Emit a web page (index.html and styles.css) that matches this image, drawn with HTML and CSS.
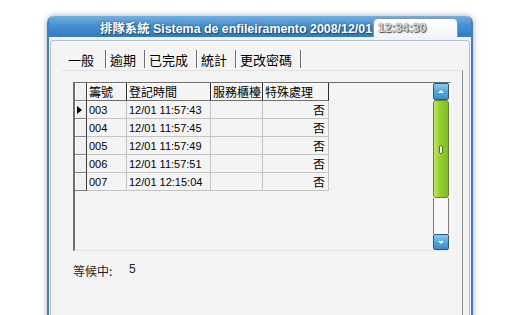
FILE: index.html
```html
<!DOCTYPE html>
<html lang="zh-Hant">
<head>
    <meta charset="UTF-8">
    <title>排隊系統</title>
    <link rel="stylesheet" href="styles.css">
</head>
<body>
    <div class="window">
        <div class="titlebar">
            <span class="title">排隊系統 Sistema de enfileiramento 2008/12/01</span>
            <span class="clock">12:34:30</span>
        </div>

        <div class="client">
            <div class="tabs">
                <span class="tab tab-first">一般</span>
                <span class="tab">逾期</span>
                <span class="tab">已完成</span>
                <span class="tab">統計</span>
                <span class="tab">更改密碼</span>
            </div>

            <div class="panel">
                <div class="grid">
                    <table class="rows">
                        <tr class="head">
                            <th class="ind"></th>
                            <th class="c-no">籌號</th>
                            <th class="c-time">登記時間</th>
                            <th class="c-desk">服務櫃檯</th>
                            <th class="c-spec">特殊處理</th>
                        </tr>
                        <tr>
                            <td class="ind"><span class="current"></span></td>
                            <td>003</td>
                            <td>12/01 11:57:43</td>
                            <td></td>
                            <td class="no">否</td>
                        </tr>
                        <tr>
                            <td class="ind"></td>
                            <td>004</td>
                            <td>12/01 11:57:45</td>
                            <td></td>
                            <td class="no">否</td>
                        </tr>
                        <tr>
                            <td class="ind"></td>
                            <td>005</td>
                            <td>12/01 11:57:49</td>
                            <td></td>
                            <td class="no">否</td>
                        </tr>
                        <tr>
                            <td class="ind"></td>
                            <td>006</td>
                            <td>12/01 11:57:51</td>
                            <td></td>
                            <td class="no">否</td>
                        </tr>
                        <tr>
                            <td class="ind"></td>
                            <td>007</td>
                            <td>12/01 12:15:04</td>
                            <td></td>
                            <td class="no">否</td>
                        </tr>
                    </table>

                    <div class="scrollbar">
                        <div class="sb-btn up"></div>
                        <div class="sb-thumb"><span class="grip"></span></div>
                        <div class="sb-track"></div>
                        <div class="sb-btn down"></div>
                    </div>
                </div>

                <div class="waiting">
                    <span class="waiting-label">等候中:</span>
                    <span class="waiting-count">5</span>
                </div>
            </div>
        </div>
    </div>
</body>
</html>
```

FILE: styles.css
```css
* {
    margin: 0;
    padding: 0;
    box-sizing: border-box;
}

html, body {
    height: 100%;
    overflow: hidden;
    background-color: #fff;
    font-family: "Liberation Sans", "Noto Sans CJK TC", sans-serif;
    color: #000;
}

body {
    padding: 16px 0 0 47px;
}

.window {
    width: 426px;
    height: 320px;
    border-left: 2px solid #3b7fbe;
    border-right: 2px solid #3b7fbe;
    border-radius: 7px 7px 0 0;
    background-color: #eef3f8;
    box-shadow: 0 0 6px rgba(0, 0, 0, 0.35);
    padding: 0 1px;
}

.titlebar {
    display: flex;
    align-items: flex-end;
    height: 21px;
    margin: 0 -1px;
    padding-left: 51px;
    border-radius: 6px 6px 0 0;
    background: linear-gradient(#74b0e0, #4690d0 45%, #3a82c4 80%, #3579b8);
}

.title {
    align-self: center;
    padding-top: 2px;
    font-size: 12.4px;
    font-weight: bold;
    color: #fff;
    white-space: nowrap;
    text-shadow: 0 0 2px #1c4a78, 1px 1px 1px #1c4a78;
}

.clock {
    height: 19px;
    width: 85px;
    margin-left: 1px;
    padding: 2px 0 0 4px;
    font-size: 12px;
    font-weight: bold;
    color: #d8d8d8;
    text-shadow: 0 0 1px #444, 1px 1px 1px #555;
    background: linear-gradient(#ffffff, #f2f5f8);
    border: 1px solid #7e98b4;
    border-bottom: none;
    border-radius: 5px 5px 0 0;
}

.client {
    height: 300px;
    margin-top: 3px;
    padding: 9px 6px 0 11px;
    background-color: #f4f4f4;
    border: 1px solid #b4c0cc;
    border-bottom: none;
    border-radius: 4px 4px 0 0;
}

.tabs {
    display: flex;
    height: 20px;
    font-family: "Noto Sans CJK TC", sans-serif;
    font-size: 13px;
}

.tab {
    height: 18px;
    line-height: 19px;
    padding: 0 8px 0 4px;
    border-right: 1px solid #6c6c6c;
    box-shadow: 1px 0 #fff;
}

.tab-first {
    padding: 0 11px 0 6px;
}

.panel {
    height: 260px;
    padding: 11px 11px 0 11px;
    border-top: 1px solid #e2e2e2;
    border-right: 1px solid #8a8a8a;
}

.grid {
    display: flex;
    height: 169px;
    border-top: 1px solid #6c6c6c;
    border-left: 2px solid #6c6c6c;
    border-bottom: 1px solid #e6e6e6;
    border-right: 1px solid #fafafa;
}

.rows {
    flex: 1;
    align-self: flex-start;
    border-collapse: separate;
    border-spacing: 0;
    table-layout: fixed;
    width: 254px;
    max-width: 254px;
    font-size: 11px;
}

.rows th,
.rows td {
    height: 18px;
    padding: 0 0 0 2px;
    text-align: left;
    white-space: nowrap;
    overflow: hidden;
    border-right: 1px solid #c4c4c4;
    border-bottom: 1px solid #c4c4c4;
}

.rows th {
    height: 18px;
    font-family: "Noto Sans CJK TC", sans-serif;
    font-size: 12px;
    font-weight: normal;
    border-right: 1px solid #2c2c2c;
    border-bottom: 1px solid #707070;
    box-shadow: inset 1px 1px #fff;
}

.rows .ind {
    width: 12px;
    padding: 0;
    background-color: #f0f0f0;
    border-right: 1px solid #3c3c3c;
    border-bottom: 1px solid #808080;
    box-shadow: inset 1px 1px #fff;
}

.c-no { width: 40px; }
.c-time { width: 84px; }
.c-desk { width: 52px; }
.c-spec { width: 66px; }

.rows td.no {
    padding: 0 3px 0 0;
    text-align: right;
    font-family: "Noto Sans CJK TC", sans-serif;
    font-size: 12px;
}

.current {
    display: block;
    width: 0;
    height: 0;
    margin-left: 2px;
    border-left: 5px solid #000;
    border-top: 4px solid transparent;
    border-bottom: 4px solid transparent;
}

.scrollbar {
    display: flex;
    flex-direction: column;
    width: 16px;
    margin-left: auto;
    margin-right: 1px;
}

.sb-btn {
    display: flex;
    justify-content: center;
    align-items: center;
    height: 17px;
    border: 1px solid #2e5676;
    border-radius: 2px;
    background: linear-gradient(#8ccaf0, #56a6dc 50%, #3c8ccc);
}

.sb-btn.down {
    height: 16px;
}

.sb-btn::after {
    content: "";
    width: 0;
    height: 0;
    border-left: 3px solid transparent;
    border-right: 3px solid transparent;
}

.sb-btn.up::after {
    border-bottom: 3px solid #fff;
}

.sb-btn.down::after {
    border-top: 3px solid #fff;
}

.sb-thumb {
    display: flex;
    justify-content: center;
    align-items: center;
    height: 98px;
    border: 1px solid #5c8a22;
    border-radius: 3px;
    background: linear-gradient(90deg, #c0e470, #98d032 40%, #82bc22);
}

.grip {
    width: 4px;
    height: 9px;
    background-color: #fff;
    border: 1px solid #506a30;
    border-radius: 2px;
}

.sb-track {
    height: 36px;
    background-color: #f8f8f8;
    border-left: 1px solid #7a7a7a;
    border-right: 1px solid #7a7a7a;
}

.waiting {
    display: flex;
    margin-top: 11px;
    font-size: 12px;
    color: #222;
}

.waiting-label {
    width: 56px;
    font-family: "Noto Sans CJK TC", sans-serif;
}
```
